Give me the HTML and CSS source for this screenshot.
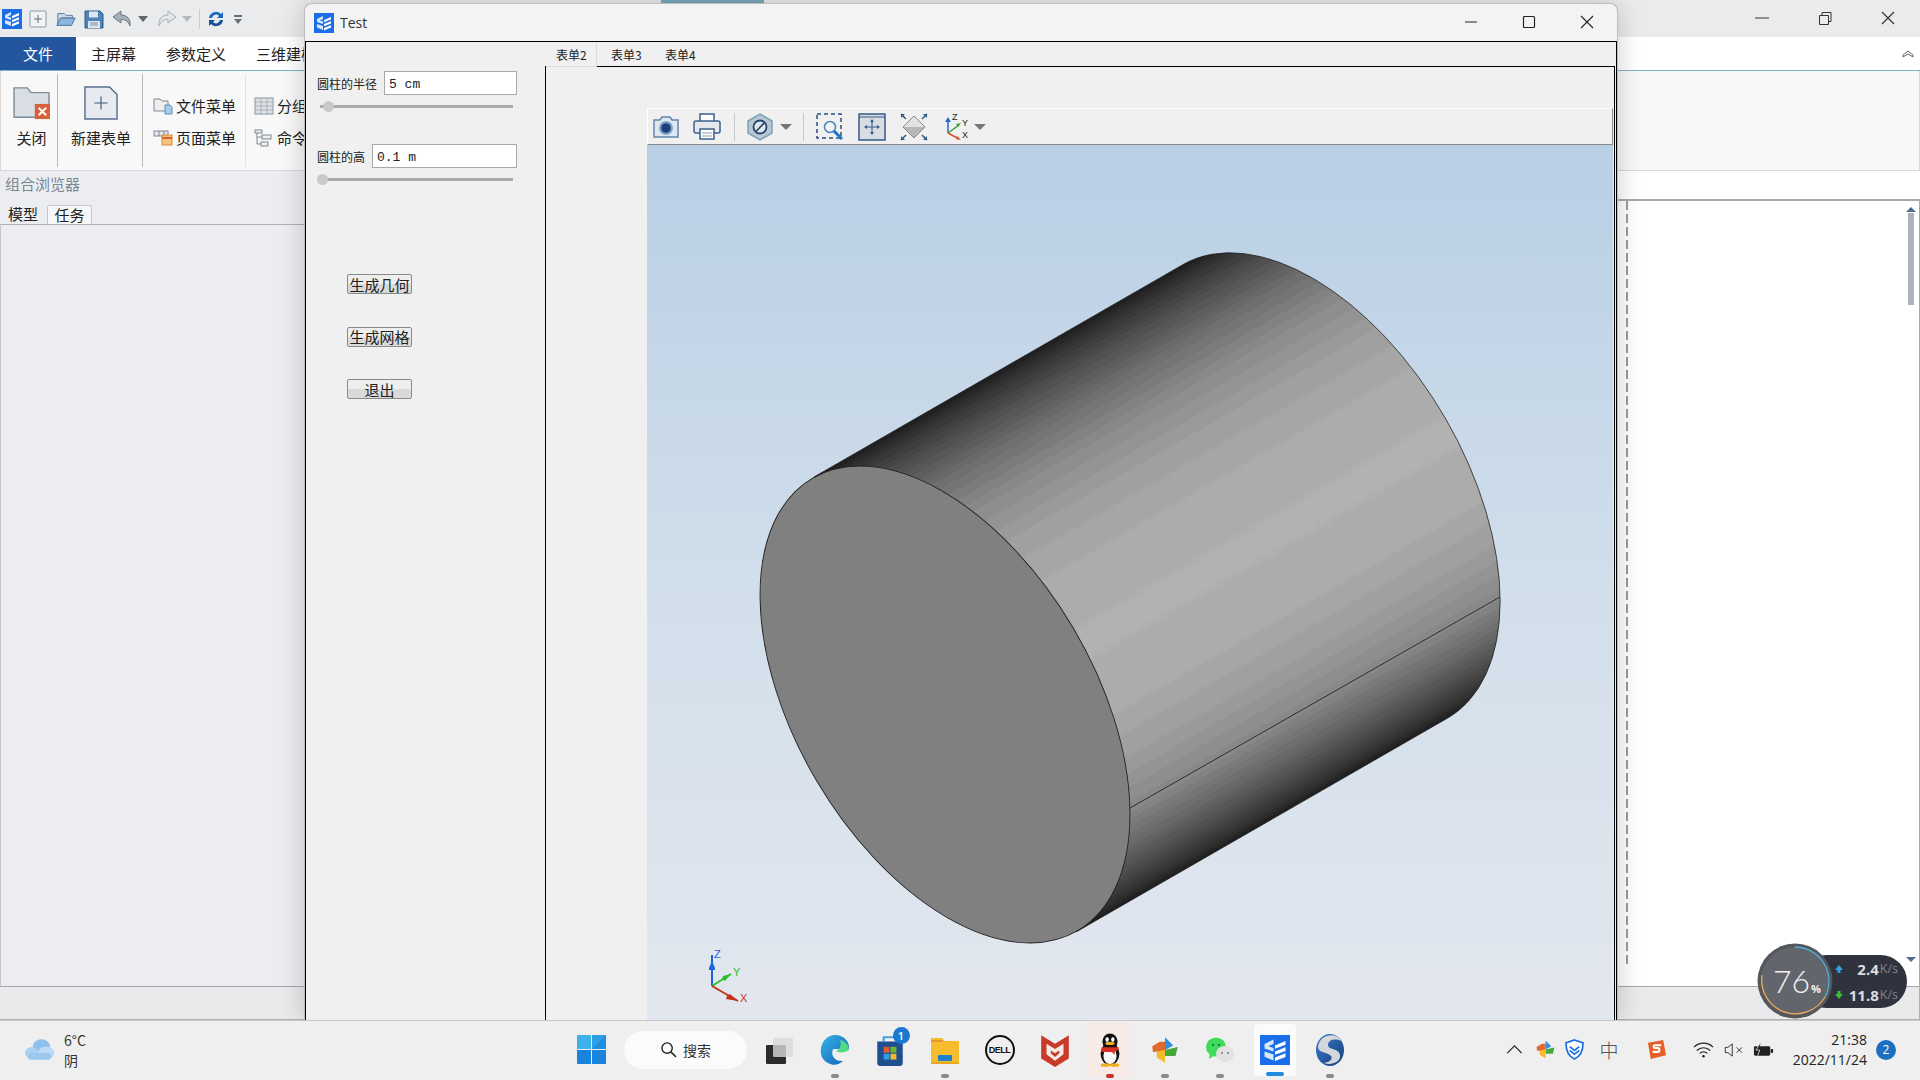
FILE: index.html
```html
<!DOCTYPE html>
<html lang="zh-CN">
<head>
<meta charset="utf-8">
<title>Test</title>
<link rel="stylesheet" href="styles.css">
</head>
<body>
<svg class="defs" width="0" height="0" aria-hidden="true">
  <symbol id="logo" viewBox="0 0 20 20">
    <rect width="20" height="20" fill="#1a6fe8"/>
    <path d="M3 6 L9 3 V6 L5.500 7.500 L9 8.600 V11 L3 9Z M3 11 L9 13 V17 L3 14.500Z" fill="#d8e8fb"/>
    <path d="M10 7 L17 4 V6.500 L10 9.200Z M10 11 L17 8.200 V10.600 L10 13.200Z M10 15 L17 12.200 V14.600 L10 17.400Z" fill="#fff"/>
  </symbol>
  <symbol id="pinwheel" viewBox="0 0 40 40">
    <path d="M20 3 L31 14 L20 20Z" fill="#2f8fdc"/>
    <path d="M20 20 L37 16 L34 28 L20 28Z" fill="#45a83a"/>
    <path d="M20 20 L20 37 L9 30 L9 20Z" fill="#f4bb2d"/>
    <path d="M20 20 L4 23 L3 15 L13 9 L20 9Z" fill="#e0692f"/>
  </symbol>
</svg>

<div class="app">
  <header class="app-title">
    <svg class="qa qa-logo"><use href="#logo"/></svg>
    <svg class="qa" viewBox="0 0 20 20"><rect x="2" y="2" width="16" height="16" rx="1" fill="#f2f3f5" stroke="#8d99a6"/><path d="M10 6v8M6 10h8" stroke="#5c6a78"/></svg>
    <svg class="qa" viewBox="0 0 22 20"><path d="M2 4h7l2 2h7v3H6L2 17Z" fill="#cfd8e3" stroke="#55789b"/><path d="M5 9h16l-4 8H1Z" fill="#8fb6dc" stroke="#3a6a9c"/></svg>
    <svg class="qa" viewBox="0 0 20 20"><path d="M1 2h15l3 3v14H1Z" fill="#4f82b8" stroke="#2c5a8e"/><rect x="5" y="2.500" width="9" height="6" fill="#dfe6ee"/><rect x="4" y="12" width="12" height="7" fill="#dfe6ee"/><path d="M6 14h8M6 16h8" stroke="#7890a8"/></svg>
    <svg class="qa" viewBox="0 0 20 20"><path d="M1 8 L9 2 V6 C15 6 19 10 18 17 C16 12 13 10.500 9 10.500 V14Z" fill="#a7afb9" stroke="#6c7783"/></svg>
    <i class="caret"></i>
    <svg class="qa qa-redo" viewBox="0 0 20 20"><path d="M19 8 L11 2 V6 C5 6 1 10 2 17 C4 12 7 10.500 11 10.500 V14Z" fill="#e3e5e8" stroke="#a9afb7"/></svg>
    <i class="caret caret-light"></i>
    <span class="qa-sep"></span>
    <svg class="qa qa-sync" viewBox="0 0 20 20"><path d="M3 9 A7 7 0 0 1 15 5 L17 3 V9 H11 L13 7 A4 4 0 0 0 6 9Z" fill="#1c68c0"/><path d="M17 11 A7 7 0 0 1 5 15 L3 17 V11 H9 L7 13 A4 4 0 0 0 14 11Z" fill="#164f99"/></svg>
    <i class="qa-more"></i>
    <div class="win-controls">
      <svg class="wc" viewBox="0 0 16 16"><path d="M1 8h14" stroke="#333"/></svg>
      <svg class="wc" viewBox="0 0 16 16"><path d="M2.500 5.500h9v9h-9zM5 5.500V2.500h9v9h-2.500" fill="none" stroke="#333"/></svg>
      <svg class="wc" viewBox="0 0 16 16"><path d="M2 2l12 12M14 2L2 14" stroke="#333" stroke-width="1.200"/></svg>
    </div>
  </header>

  <nav class="app-tabs">
    <span class="app-tab app-tab-active">文件</span>
    <span class="app-tab">主屏幕</span>
    <span class="app-tab">参数定义</span>
    <span class="app-tab">三维建模</span>
    <svg class="collapse" viewBox="0 0 12 10"><path d="M1 6l5-4 5 4v2l-5-3-5 3z" fill="#fff" stroke="#666"/></svg>
  </nav>

  <section class="ribbon">
    <div class="rb-group rb-g1">
      <svg class="rb-big" viewBox="0 0 40 36"><path d="M1 2h14l4 5h19v26H1Z" fill="#d9dee5" stroke="#7d8a98" stroke-width="1.500"/><rect x="23" y="19" width="16" height="16" fill="#d8603a"/><path d="M27 23l8 8M35 23l-8 8" stroke="#fff" stroke-width="2"/></svg>
      <span>关闭</span>
    </div>
    <div class="rb-group rb-g2">
      <svg class="rb-big" viewBox="0 0 36 36"><path d="M1 1h26l8 8v26H1Z" fill="#e7ebf0" stroke="#556f90" stroke-width="1.500"/><path d="M18 11v14M11 18h14" stroke="#3d5877" stroke-width="1.200"/></svg>
      <span>新建表单</span>
    </div>
    <div class="rb-group rb-g3">
      <div class="rb-small"><svg viewBox="0 0 20 18"><path d="M1 2h6l2 2h6v10H1Z" fill="#eceef0" stroke="#7c8692"/><path d="M12 8h5l2 2v7h-7Z" fill="#a5cdea" stroke="#5a93c2"/></svg><span>文件菜单</span></div>
      <div class="rb-small"><svg viewBox="0 0 20 18"><rect x="1" y="2" width="14" height="5" fill="#e6e8ea" stroke="#7c8692"/><path d="M6 2v5M11 2v5" stroke="#7c8692"/><rect x="9" y="6" width="10" height="10" fill="#f5c27c" stroke="#d98b3c"/><path d="M9 9h10" stroke="#d9602e" stroke-width="2"/></svg><span>页面菜单</span></div>
    </div>
    <div class="rb-group rb-g4">
      <div class="rb-small"><svg viewBox="0 0 20 18"><rect x="1" y="1" width="18" height="16" fill="#dfe3e6" stroke="#8a949e"/><path d="M7 1v16M13 1v16M1 5h18M1 9h18M1 13h18" stroke="#a9b1b9"/></svg><span>分组</span></div>
      <div class="rb-small"><svg viewBox="0 0 20 18"><path d="M3 3v12h4M3 8h5" fill="none" stroke="#7c8692"/><rect x="1" y="1" width="7" height="3" fill="#eee" stroke="#7c8692"/><rect x="8" y="6" width="9" height="4" fill="#eee" stroke="#7c8692"/><rect x="7" y="13" width="7" height="4" fill="#eee" stroke="#7c8692"/></svg><span>命令</span></div>
    </div>
  </section>

  <div class="workspace">
    <aside class="browser">
      <div class="browser-title">组合浏览器</div>
      <div class="browser-tabs">
        <span class="browser-tab">模型</span>
        <span class="browser-tab browser-tab-active">任务</span>
      </div>
      <div class="browser-body"></div>
      <div class="browser-foot"></div>
    </aside>
    <div class="right-area">
      <div class="right-top"></div>
      <div class="right-box">
        <div class="right-dash"></div>
        <div class="scroll">
          <i class="scroll-up"></i>
          <i class="scroll-thumb"></i>
          <i class="scroll-down"></i>
        </div>
      </div>
      <div class="right-foot"></div>
    </div>
  </div>
</div>

<div class="backwin-strip"></div>

<div class="dialog">
  <div class="dlg-title">
    <svg class="dlg-logo"><use href="#logo"/></svg>
    <span class="dlg-name">Test</span>
    <div class="dlg-controls">
      <svg class="dc" viewBox="0 0 16 16"><path d="M2 8h12" stroke="#222"/></svg>
      <svg class="dc" viewBox="0 0 16 16"><rect x="2.500" y="2.500" width="11" height="11" rx="1" fill="none" stroke="#222" stroke-width="1.200"/></svg>
      <svg class="dc" viewBox="0 0 16 16"><path d="M2 2l12 12M14 2L2 14" stroke="#222" stroke-width="1.100"/></svg>
    </div>
  </div>
  <div class="dlg-body">
    <div class="form">
      <div class="field">
        <label class="field-label">圆柱的半径</label>
        <div class="field-input">5 cm</div>
      </div>
      <div class="slider"><i class="knob knob-a"></i></div>
      <div class="field field-second">
        <label class="field-label">圆柱的高</label>
        <div class="field-input">0.1 m</div>
      </div>
      <div class="slider"><i class="knob knob-b"></i></div>
      <div class="actions">
        <button class="btn">生成几何</button>
        <button class="btn">生成网格</button>
        <button class="btn">退出</button>
      </div>
    </div>
    <div class="tabs-side">
      <div class="tab-strip">
        <span class="tab tab-active">表单2</span>
        <span class="tab">表单3</span>
        <span class="tab">表单4</span>
      </div>
      <div class="tab-pane">
        <div class="viewer">
          <div class="toolbar">
            <svg class="tb tb-cam" viewBox="0 0 28 26"><path d="M2 6h6l2-3h8l2 3h6v17H2Z" fill="#dfe7f0" stroke="#5f86ad" stroke-width="1.500"/><circle cx="14" cy="14" r="7" fill="#7fa3c8"/><circle cx="14" cy="14" r="4.800" fill="#1e3f78"/></svg>
            <svg class="tb" viewBox="0 0 28 28"><rect x="7" y="1" width="14" height="8" fill="#fff" stroke="#39608c" stroke-width="1.500"/><rect x="1" y="8" width="26" height="12" rx="2" fill="#e4e8ee" stroke="#39608c" stroke-width="1.500"/><rect x="7" y="16" width="14" height="10" fill="#fff" stroke="#39608c" stroke-width="1.500"/><path d="M9 20h10M9 23h10" stroke="#8d9cad"/></svg>
            <span class="tb-sep"></span>
            <svg class="tb tb-nos" viewBox="0 0 26 28"><path d="M13 1L25 8v12l-12 7L1 20V8Z" fill="#b9c7d3" stroke="#7ba2ba" stroke-width="1.500"/><circle cx="13" cy="14" r="6.500" fill="#e2e7ec" stroke="#24456f" stroke-width="1.800"/><path d="M9 18.500L17.500 9.500" stroke="#24456f" stroke-width="1.800"/></svg>
            <i class="tb-caret tb-caret-a"></i>
            <span class="tb-sep"></span>
            <svg class="tb" viewBox="0 0 28 28"><rect x="1" y="1" width="24" height="24" fill="none" stroke="#2a4d80" stroke-width="1.500" stroke-dasharray="4 3"/><circle cx="14" cy="14" r="5.500" fill="#f0f3f6" stroke="#4a86b8" stroke-width="1.500"/><path d="M18 18l8 8" stroke="#1c73c8" stroke-width="3"/></svg>
            <svg class="tb" viewBox="0 0 28 28"><rect x="1" y="1" width="26" height="26" fill="#d8dde2" stroke="#33598a" stroke-width="1.500"/><path d="M1 4h26" stroke="#33598a"/><path d="M14 8v12M8 14h12" stroke="#33598a"/><path d="M14 6l-2 3h4ZM14 22l-2-3h4ZM6 14l3-2v4ZM22 14l-3-2v4Z" fill="#33598a"/></svg>
            <svg class="tb" viewBox="0 0 28 28"><path d="M14 3L25 14 14 25 3 14Z" fill="#b7b7b7"/><path d="M14 3L25 14H3Z" fill="#e2e2e2"/><path d="M14 3L25 14 14 25 3 14Z" fill="none" stroke="#8a8a8a"/><path d="M1 1l5 5M27 1l-5 5M1 27l5-5M27 27l-5-5" stroke="#33598a" stroke-width="1.500"/><path d="M1 1h4L1 5ZM27 1h-4l4 4ZM1 27h4l-4-4ZM27 27h-4l4-4Z" fill="#33598a"/></svg>
            <svg class="tb tb-axes" viewBox="0 0 28 28">
              <path d="M6 20V7" stroke="#1f6fc8" stroke-width="1.500"/><path d="M6 4l-3 5h6z" fill="#1f6fc8"/>
              <path d="M6 20L17 12" stroke="#3c9a3c" stroke-width="1.500"/><path d="M19 10l-5 1 2 3z" fill="#3c9a3c"/>
              <path d="M6 20l11 6" stroke="#d8502a" stroke-width="1.500"/><path d="M19 27l-5-1 1-3z" fill="#d8502a"/>
              <text x="10" y="7" class="tb-axis-label">Z</text><text x="20" y="13" class="tb-axis-label">Y</text><text x="20" y="25" class="tb-axis-label">X</text>
            </svg>
            <i class="tb-caret"></i>
          </div>
          <svg class="canvas" viewBox="647 145 966 875" preserveAspectRatio="xMinYMin slice">
            <defs>
              <linearGradient id="cyl" gradientUnits="userSpaceOnUse" x1="814" y1="477" x2="1076" y2="932">
                <stop offset="0" stop-color="#1e1e1e"/>
                <stop offset=".025" stop-color="#343434"/>
                <stop offset=".07" stop-color="#505050"/>
                <stop offset=".13" stop-color="#707070"/>
                <stop offset=".21" stop-color="#8c8c8c"/>
                <stop offset=".3" stop-color="#a0a0a0"/>
                <stop offset=".41" stop-color="#acacac"/>
                <stop offset=".53" stop-color="#b2b2b2"/>
                <stop offset=".66" stop-color="#acacac"/>
                <stop offset=".77" stop-color="#9c9c9c"/>
                <stop offset=".85" stop-color="#888"/>
                <stop offset=".91" stop-color="#686868"/>
                <stop offset=".955" stop-color="#484848"/>
                <stop offset=".985" stop-color="#303030"/>
                <stop offset="1" stop-color="#1e1e1e"/>
              </linearGradient>
              <filter id="facets" color-interpolation-filters="sRGB">
                <feComponentTransfer>
                  <feFuncR type="discrete" tableValues="0 .034 .058 .081 .105 .129 .153 .177 .2 .224 .248 .272 .296 .32 .343 .367 .391 .415 .439 .462 .486 .51 .534 .558 .581 .605 .629 .653 .677 .7 .724 .748 .772 .796 .82 .843 .867 .891 .915 .939 .962 .986"/>
                  <feFuncG type="discrete" tableValues="0 .034 .058 .081 .105 .129 .153 .177 .2 .224 .248 .272 .296 .32 .343 .367 .391 .415 .439 .462 .486 .51 .534 .558 .581 .605 .629 .653 .677 .7 .724 .748 .772 .796 .82 .843 .867 .891 .915 .939 .962 .986"/>
                  <feFuncB type="discrete" tableValues="0 .034 .058 .081 .105 .129 .153 .177 .2 .224 .248 .272 .296 .32 .343 .367 .391 .415 .439 .462 .486 .51 .534 .558 .581 .605 .629 .653 .677 .7 .724 .748 .772 .796 .82 .843 .867 .891 .915 .939 .962 .986"/>
                </feComponentTransfer>
              </filter>
            </defs>
            <path d="M814 477 L1184 264 A262.200 149.400 59.600 0 1 1446 719 L1076 932Z" fill="url(#cyl)" filter="url(#facets)"/>
            <path d="M814 477 L1184 264 A262.200 149.400 59.600 0 1 1446 719 L1076 932" fill="none" stroke="#222" stroke-width=".8"/>
            <path d="M1130 808 L1500 597" stroke="#222" stroke-width=".9" fill="none"/>
            <ellipse cx="945" cy="704.500" rx="262.200" ry="149.400" transform="rotate(59.600 945 704.500)" fill="#808080" stroke="#222" stroke-width=".9"/>
            <g class="triad">
              <path d="M712 986V955" stroke="#1c66dc" stroke-width="2"/><path d="M712 961l-3 7v2h6v-2z" fill="#1c66dc"/>
              <path d="M712 986L731 974" stroke="#2ec02e" stroke-width="2"/><path d="M731 974l-8 2-1 3 3 2z" fill="#2ec02e"/>
              <path d="M712 986L738 1001" stroke="#c8301c" stroke-width="2"/><path d="M738 1001l-8-7-3 2-1 3z" fill="#c8301c"/>
              <text x="714" y="958" class="tri tri-z">Z</text>
              <text x="733" y="976" class="tri tri-y">Y</text>
              <text x="740" y="1002" class="tri tri-x">X</text>
            </g>
          </svg>
        </div>
      </div>
    </div>
  </div>
</div>

<div class="net-widget">
  <div class="net-pill">
    <div class="net-row"><svg class="net-arrow" viewBox="0 0 10 10"><path d="M5 1l4 5H6.500v3h-3V6H1z" fill="#38a0e0"/></svg><span class="net-val">2.4</span><span class="net-unit">K/s</span></div>
    <div class="net-row"><svg class="net-arrow" viewBox="0 0 10 10"><path d="M5 9L1 4h2.500V1h3v3H9z" fill="#3cc03c"/></svg><span class="net-val">11.8</span><span class="net-unit">K/s</span></div>
  </div>
  <svg class="net-dial" viewBox="0 0 76 76">
    <circle cx="38" cy="38" r="37.500" fill="#55575d"/>
    <circle cx="38" cy="38" r="34" fill="#63656c"/>
    <path d="M38 4 A34 34 0 0 1 68 54" fill="none" stroke="#4fb0dc" stroke-width="1.300"/>
    <path d="M68 54 A34 34 0 0 1 5 32" fill="none" stroke="#f0a858" stroke-width="1.300"/>
    <text x="16" y="50" class="dial-num">76</text>
    <text x="54" y="50" class="dial-pct">%</text>
  </svg>
</div>

<footer class="taskbar">
  <div class="weather">
    <svg class="weather-icon" viewBox="0 0 32 24"><ellipse cx="18" cy="9" rx="9" ry="8" fill="#8cc0ee"/><ellipse cx="8" cy="15" rx="7" ry="6" fill="#a9d0f2"/><ellipse cx="23" cy="15" rx="8.500" ry="6.500" fill="#bcdaf5"/><rect x="4" y="15" width="24" height="7" rx="3" fill="#9cc8ef"/></svg>
    <div class="weather-text"><span>6°C</span><span>阴</span></div>
  </div>
  <div class="start-tile">
    <svg class="start" viewBox="0 0 29 29"><path d="M0 1a1 1 0 0 1 1-1h13v14H0Z" fill="#3db2ea"/><path d="M15 0h13a1 1 0 0 1 1 1v13H15Z" fill="#2ba0e6"/><path d="M29 0L15 14h14Z" fill="#1f8de0"/><path d="M0 15h14v14H1a1 1 0 0 1-1-1Z" fill="#1a84dc"/><path d="M15 15h14v13a1 1 0 0 1-1 1H15Z" fill="#1a84dc"/></svg>
  </div>
  <div class="search">
    <svg class="search-icon" viewBox="0 0 18 18"><circle cx="7.500" cy="7.500" r="5.500" fill="none" stroke="#222" stroke-width="1.500"/><path d="M11.500 11.500L17 17" stroke="#222" stroke-width="1.600"/></svg>
    <span>搜索</span>
  </div>
  <div class="tiles">
    <div class="tile"><svg class="ti" viewBox="0 0 30 30"><rect x="1" y="10" width="20" height="19" rx="1" fill="#2b2b2b"/><rect x="8" y="3" width="20" height="19" rx="1" fill="#d8d8d8" opacity=".8"/></svg></div>
    <div class="tile tile-dot"><svg class="ti" viewBox="0 0 30 32"><defs><linearGradient id="edge" x1="0" y1="0" x2="1" y2="1"><stop offset="0" stop-color="#35b4e8"/><stop offset="1" stop-color="#1560b8"/></linearGradient></defs><path d="M15 1C24 1 30 8 29 15 H13 C10 22 16 28 23 27 C19 31 13 32 8 29 C2 26 0 20 1 14 C2 7 8 1 15 1Z" fill="url(#edge)"/><path d="M20 6C26 7 29 12 29 16 C25 19 19 19 16 17 C20 15 22 11 20 6Z" fill="#4fdc82"/></svg></div>
    <div class="tile"><div class="tile-inner"><svg class="ti" viewBox="0 0 28 32"><path d="M8 8V4h12v4" fill="none" stroke="#4ca0e0" stroke-width="2"/><path d="M2 8h24v20a3 3 0 0 1-3 3H5a3 3 0 0 1-3-3Z" fill="#1f4f8e"/><rect x="8" y="13" width="5.500" height="5.500" fill="#e55a2c"/><rect x="14.500" y="13" width="5.500" height="5.500" fill="#6cb82e"/><rect x="8" y="19.500" width="5.500" height="5.500" fill="#2ca0e6"/><rect x="14.500" y="19.500" width="5.500" height="5.500" fill="#f4bb2d"/></svg><span class="store-badge">1</span></div></div>
    <div class="tile tile-dot"><svg class="ti" viewBox="0 0 30 30"><path d="M1 3h11l3 3h14v22H1Z" fill="#f6bc2e"/><path d="M1 6h12" stroke="#e08a2c" stroke-width="1.500"/><rect x="8" y="20" width="14" height="6" rx="1" fill="#1c80d0"/><rect x="1" y="27" width="28" height="2" fill="#e8a820"/></svg></div>
    <div class="tile"><div class="dell"><span>DELL</span></div></div>
    <div class="tile"><svg class="ti" viewBox="0 0 28 32"><path d="M1 2L14 10 27 2V24L14 32 1 24Z" fill="#c93a28"/><path d="M6 10L14 15 22 10V20L14 26 6 20Z" fill="#f3e9e6"/><path d="M10 16.500L14 19 18 16.500V19L14 22.500 10 19Z" fill="#c93a28"/></svg></div>
    <div class="tile tile-qq"><svg class="ti" viewBox="0 0 28 36"><ellipse cx="14" cy="22" rx="10" ry="12" fill="#111"/><ellipse cx="14" cy="24" rx="7" ry="9" fill="#f7f7f7"/><ellipse cx="14" cy="9" rx="8" ry="8.500" fill="#111"/><ellipse cx="11" cy="7" rx="1.800" ry="2.500" fill="#fff"/><ellipse cx="17" cy="7" rx="1.800" ry="2.500" fill="#fff"/><ellipse cx="14" cy="11" rx="5" ry="1.800" fill="#f2b023"/><path d="M5 15h18v3l-4 1v4l-3-3H5Z" fill="#d83020"/><ellipse cx="9" cy="34" rx="5" ry="2" fill="#f2b023"/><ellipse cx="19" cy="34" rx="5" ry="2" fill="#f2b023"/></svg></div>
    <div class="tile tile-dot"><svg class="ti"><use href="#pinwheel"/></svg></div>
    <div class="tile tile-dot"><svg class="ti" viewBox="0 0 30 30"><ellipse cx="11" cy="12" rx="10" ry="9.500" fill="#3ddc5a"/><path d="M5 18l-1 6 6-4Z" fill="#3ddc5a"/><circle cx="8" cy="10" r="1" fill="#155"/><circle cx="14" cy="10" r="1" fill="#155"/><ellipse cx="20" cy="19" rx="9" ry="8" fill="#e2e2e2"/><circle cx="17" cy="18" r="1" fill="#777"/><circle cx="23" cy="18" r="1" fill="#777"/></svg></div>
    <div class="tile tile-app"><svg class="ti ti-app"><use href="#logo"/></svg></div>
    <div class="tile tile-dot"><svg class="ti" viewBox="0 0 30 34"><defs><linearGradient id="swirl" x1="0" y1="0" x2="1" y2="1"><stop offset="0" stop-color="#3c7cc8"/><stop offset="1" stop-color="#163e80"/></linearGradient></defs><ellipse cx="15" cy="17" rx="14" ry="16" fill="url(#swirl)"/><path d="M5 8C11 0 23 1 26 8 C20 5 13 7 13 12 C13 17 24 15 25 22 C26 29 16 33 9 30 C15 29 18 26 16 23 C13 19 3 20 3 14 C3 12 4 10 5 8Z" fill="#d3d7dc"/></svg></div>
  </div>
  <div class="tray">
    <svg class="tr tr-chev" viewBox="0 0 18 10"><path d="M1 9l8-8 8 8" fill="none" stroke="#222" stroke-width="1.300"/></svg>
    <svg class="tr tr-pin"><use href="#pinwheel"/></svg>
    <svg class="tr tr-shield" viewBox="0 0 20 22"><path d="M10 1l9 3c0 8-2 14-9 17C3 18 1 12 1 4Z" fill="#fff" stroke="#1c70e0" stroke-width="1.800"/><path d="M5 8l5 4 5-4M5 12l5 4 5-4" fill="none" stroke="#1c70e0" stroke-width="1.800"/></svg>
    <span class="tr-zh">中</span>
    <svg class="tr tr-s" viewBox="0 0 22 22"><path d="M2 4L18 1l3 16L5 21Z" fill="#e4622a"/><path d="M16 6.500H9.500c-2 0-2 3 0 3h3c2 0 2 4 0 4H7" fill="none" stroke="#fff" stroke-width="2.200"/></svg>
    <svg class="tr tr-wifi" viewBox="0 0 22 16"><path d="M1 5a14 14 0 0 1 20 0M4 8.500a10 10 0 0 1 14 0M7 11.500a6 6 0 0 1 8 0" fill="none" stroke="#222" stroke-width="1.200"/><circle cx="11" cy="14.500" r="1.300" fill="#222"/></svg>
    <svg class="tr tr-vol" viewBox="0 0 22 16"><path d="M1 5h3l5-4v14l-5-4H1Z" fill="none" stroke="#333" stroke-width="1.100"/><path d="M14 5l6 6M20 5l-6 6" stroke="#333" stroke-width="1.100"/></svg>
    <svg class="tr tr-bat" viewBox="0 0 22 16"><rect x="1" y="4" width="17" height="10" rx="1.500" fill="#222"/><rect x="18.500" y="7" width="2.500" height="4" fill="#222"/><path d="M8 0L3 8h4l-2 6" fill="#222" stroke="#f0f0f0" stroke-width=".8"/></svg>
    <div class="clock"><span>21:38</span><span>2022/11/24</span></div>
    <span class="notify">2</span>
  </div>
</footer>
</body>
</html>
```

FILE: styles.css
```css
* { box-sizing: border-box; }
html, body { margin: 0; padding: 0; }
body {
  width: 1920px;
  height: 1080px;
  overflow: hidden;
  position: relative;
  display: flex;
  flex-direction: column;
  font-family: "Noto Sans CJK SC", "Noto Sans", sans-serif;
  font-size: 15px;
  color: #222;
  background: #fff;
}
.defs { position: absolute; }

/* background application */
.app { height: 1020px; display: flex; flex-direction: column; flex: none; }
.app-title {
  height: 37px;
  background: #eaebed;
  display: flex;
  align-items: center;
  padding-left: 2px;
  flex: none;
}
.qa { width: 20px; height: 20px; margin-right: 8px; flex: none; }
.qa-logo { margin-right: 6px; }
.qa-redo { margin-left: 9px; margin-right: 5px; }
.qa-sync { margin-right: 6px; }
.caret {
  width: 0; height: 0; margin-left: -2px;
  border-left: 5px solid transparent;
  border-right: 5px solid transparent;
  border-top: 6px solid #5e6670;
}
.caret-light { border-top-color: #b5b9bf; margin-left: 0; }
.qa-sep { width: 1px; height: 20px; background: #c9ccd0; margin: 0 6px 0 7px; }
.qa-more {
  width: 8px; height: 8px; margin-left: 2px;
  border-top: 2px solid #6a7078;
  position: relative;
}
.qa-more::after {
  content: "";
  position: absolute; left: 0; top: 2px;
  border-left: 4px solid transparent;
  border-right: 4px solid transparent;
  border-top: 5px solid #6a7078;
}
.win-controls { margin-left: auto; display: flex; gap: 47px; padding: 0 24px 2px 0; }
.wc { width: 16px; height: 16px; }

.app-tabs {
  height: 34px;
  background: #fff;
  border-bottom: 1px solid #7fb2c8;
  display: flex;
  align-items: center;
  flex: none;
}
.app-tab { padding: 0 15px; white-space: nowrap; color: #222; }
.app-tab-active {
  width: 76px;
  height: 33px;
  background: #24569f;
  color: #fff;
  display: flex;
  align-items: center;
  justify-content: center;
  padding: 0;
}
.collapse { width: 12px; height: 10px; margin-left: auto; margin-right: 6px; }

.ribbon {
  height: 100px;
  background: #f8f8f8;
  border: 1px solid #d8d8d8;
  border-top: none;
  display: flex;
  padding-top: 3px;
  flex: none;
}
.rb-group { height: 93px; border-right: 1px solid #b9b9b9; flex: none; }
.rb-g1, .rb-g2 {
  display: flex; flex-direction: column; align-items: center;
  padding-top: 12px;
}
.rb-g1 { width: 57px; padding-left: 5px; }
.rb-g2 { width: 85px; padding-left: 2px; }
.rb-big { width: 38px; height: 34px; margin-bottom: 7px; }
.rb-g3 { width: 103px; border-right-color: #e2e2e2; }
.rb-g3, .rb-g4 {
  display: flex; flex-direction: column; gap: 11px;
  padding: 21px 0 0 10px;
}
.rb-g4 { width: 120px; border: none; padding-left: 8px; }
.rb-small { display: flex; align-items: center; gap: 3px; height: 21px; white-space: nowrap; }
.rb-small svg { width: 20px; height: 18px; flex: none; }

.workspace { flex: 1; display: flex; min-height: 0; }
.browser {
  width: 305px;
  background: #ebedf0;
  display: flex;
  flex-direction: column;
  flex: none;
}
.browser-title { height: 34px; padding: 1px 0 0 5px; color: #7a8896; line-height: 24px; }
.browser-tabs { height: 19px; display: flex; padding-left: 0; align-items: flex-end; flex: none; }
.browser-tab { width: 46px; height: 19px; text-align: center; line-height: 17px; }
.browser-tab-active {
  background: #f6f7f8;
  border: 1px solid #c6c8cb;
  border-bottom: none;
  border-radius: 2px 2px 0 0;
  width: 45px;
  margin-left: 1px;
}
.browser-body { flex: 1; border-top: 1px solid #aeb0b2; border-left: 1px solid #c8c8c8; }
.browser-foot { height: 34px; border-top: 1px solid #a8a8a8; background: #e8eaec; border-bottom: 1px solid #b0b0b0; }

.right-area { flex: 1; display: flex; flex-direction: column; background: #fff; min-width: 0; }
.right-top { height: 28px; flex: none; }
.right-box {
  flex: 1;
  border-top: 2px solid #aaa;
  border-right: 1px solid #aaa;
  display: flex;
  justify-content: flex-end;
  position: relative;
}
.right-dash {
  position: absolute;
  left: 1321px;
  top: 0;
  bottom: 19px;
  width: 2px;
  background: repeating-linear-gradient(#9c9c9c 0 9px, transparent 9px 13px);
}
.scroll { width: 14px; margin-right: 1px; display: flex; flex-direction: column; align-items: center; padding-top: 6px; }
.scroll-up, .scroll-down { width: 0; height: 0; border-left: 5px solid transparent; border-right: 5px solid transparent; }
.scroll-up { border-bottom: 5px solid #4f6c92; }
.scroll-down { border-top: 5px solid #4f6c92; margin-top: auto; margin-bottom: 24px; }
.scroll-thumb { width: 6px; height: 92px; background: #aeb3b9; margin-top: 1px; }
.right-foot { height: 34px; flex: none; background: #e9eaec; border-top: 1px solid #a8a8a8; border-bottom: 1px solid #b0b0b0; border-right: 1px solid #b0b0b0; }

.backwin-strip {
  position: absolute;
  left: 661px; top: 0;
  width: 103px; height: 4px;
  background: #7aa9bf;
}

/* test dialog */
.dialog {
  position: absolute;
  left: 304px;
  top: 3px;
  width: 1314px;
  height: 1017px;
  background: #f3f3f3;
  border: 1px solid #bdbdbd;
  border-bottom: none;
  border-radius: 8px 8px 0 0;
  box-shadow: 0 0 26px rgba(0, 0, 0, .2);
  display: flex;
  flex-direction: column;
}
.dlg-title { height: 37px; display: flex; align-items: center; padding-left: 9px; flex: none; }
.dlg-logo { width: 20px; height: 20px; }
.dlg-name { margin-left: 6px; font-family: "Open Sans", "Noto Sans", sans-serif; font-size: 14px; color: #333; }
.dlg-controls { margin-left: auto; display: flex; gap: 42px; padding: 0 22px 2px 0; }
.dc { width: 16px; height: 16px; }
.dlg-body {
  flex: 1;
  background: #f0f0f0;
  border: 1px solid #000;
  border-bottom: none;
  display: flex;
  min-height: 0;
}

.form { width: 240px; flex: none; padding: 29px 29px 0 11px; }
.field { display: flex; align-items: center; gap: 7px; height: 24px; }
.field-label { font-size: 12px; white-space: nowrap; }
.field-input {
  flex: 1;
  height: 24px;
  background: #fff;
  border: 1px solid #a9a9a9;
  padding-left: 4px;
  font-family: "Liberation Mono", monospace;
  font-size: 13px;
  line-height: 25px;
  color: #222;
}
.slider {
  height: 3px;
  margin: 10px 4px 0 3px;
  background: #ababab;
  position: relative;
}
.knob {
  position: absolute;
  top: -4px;
  width: 11px;
  height: 11px;
  border-radius: 50%;
  background: #c9c9c9;
}
.knob-a { left: 3px; }
.knob-b { left: -3px; }
.slider + .field-second { margin-top: 36px; }
.actions {
  margin: 93px 0 0 30px;
  display: flex;
  flex-direction: column;
  gap: 32.500px;
  align-items: flex-start;
}
.btn {
  width: 65px;
  height: 20px;
  padding: 0;
  border: 1px solid #8a8a8a;
  border-radius: 2px;
  background: linear-gradient(#eeeeee 0 50%, #dadada 50% 100%);
  font-family: "Noto Sans CJK SC", sans-serif;
  font-size: 15px;
  line-height: 17px;
  color: #222;
}

.tabs-side { flex: 1; display: flex; flex-direction: column; min-width: 0; }
.tab-strip { height: 25px; display: flex; flex: none; margin-right: 1px; position: relative; }
.tab { width: 54px; padding-left: 14px; font-size: 12px; line-height: 26px; white-space: nowrap; }
.tab-active {
  width: 51px;
  height: 25px;
  padding-left: 10px;
  background: #f0f0f0;
  border: 1px solid #dcdcdc;
  border-top: none;
  border-left: none;
  position: relative;
  z-index: 1;
}
.tab-pane {
  flex: 1;
  min-height: 0;
  border: 1px solid #000;
  border-bottom: none;
  margin: -1px 1px 0 -1px;
  padding: 41px 1px 0 101px;
}
.viewer { height: 100%; display: flex; flex-direction: column; }
.toolbar {
  height: 37px;
  flex: none;
  background: #f0f0f0;
  border: 1px solid #fff;
  border-right-color: #8a8a8a;
  border-bottom-color: #8a8a8a;
  display: flex;
  align-items: center;
  padding-left: 4px;
}
.tb { width: 28px; height: 28px; margin-right: 14px; flex: none; }
.tb-cam { margin-right: 13px; }
.tb-nos { width: 26px; margin-right: 7px; }
.tb-sep { width: 1px; height: 28px; background: #c8c8c8; margin: 0 12px 0 -1px; flex: none; }
.tb-caret {
  width: 0; height: 0; flex: none;
  border-left: 6px solid transparent;
  border-right: 6px solid transparent;
  border-top: 6px solid #777;
  margin-right: 11px;
}
.tb-caret-a { margin-right: 12px; }
.tb-axes { margin-right: 4px; }
.tb-axis-label { font-family: "Liberation Sans", sans-serif; font-size: 9px; fill: #222; }
.canvas {
  flex: 1;
  width: 100%;
  min-height: 0;
  display: block;
  background: linear-gradient(#b9cfe5, #d2dfeb 52%, #e3e7ef);
}
.tri { font-family: "Liberation Sans", sans-serif; font-size: 11px; }
.tri-z { fill: #1c66dc; }
.tri-y { fill: #2ec02e; }
.tri-x { fill: #c8301c; }

/* network widget */
.net-widget {
  position: absolute;
  left: 1757px;
  top: 943px;
  width: 152px;
  height: 76px;
  display: flex;
  align-items: center;
}
.net-dial { position: absolute; left: 0; top: 0; width: 76px; height: 76px; }
.net-pill {
  margin-left: 43px;
  width: 107px;
  height: 53px;
  background: #30333d;
  border-radius: 27px;
  padding: 2px 9px 0 34px;
  display: flex;
  flex-direction: column;
  justify-content: space-around;
}
.net-row { display: flex; align-items: center; justify-content: flex-end; font-family: "Open Sans", sans-serif; line-height: 16px; }
.net-arrow { width: 10px; height: 10px; margin-right: auto; }
.net-val { font-size: 15px; font-weight: 700; color: #dcdde0; }
.net-unit { font-size: 12.500px; color: #7e828c; margin-left: 1px; }
.dial-num { font-family: "Lato", "Open Sans", sans-serif; font-size: 32px; font-weight: 300; fill: #f2f2f2; }
.dial-pct { font-family: "Open Sans", sans-serif; font-size: 11px; font-weight: 700; fill: #f2f2f2; }

/* taskbar */
.taskbar {
  height: 60px;
  flex: none;
  background: #efefef;
  border-top: 1px solid #c8c8c8;
  display: flex;
  align-items: center;
  padding-bottom: 2px;
  position: relative;
}
.weather { width: 564px; flex: none; display: flex; align-items: center; padding-left: 24px; gap: 9px; }
.weather-icon { width: 31px; height: 24px; }
.weather-text { display: flex; flex-direction: column; font-size: 14px; line-height: 20px; color: #333; }
.start-tile { width: 55px; flex: none; display: flex; justify-content: center; }
.start { width: 29px; height: 29px; }
.search {
  width: 123px;
  height: 38px;
  margin-left: 5px;
  border-radius: 19px;
  background: #fbfbfb;
  display: flex;
  align-items: center;
  gap: 6px;
  padding-left: 36px;
  flex: none;
  font-size: 14px;
  color: #333;
}
.search-icon { width: 17px; height: 17px; flex: none; }
.tiles { display: flex; margin-left: 5px; flex: none; align-self: flex-start; }
.tile {
  width: 55px;
  height: 58px;
  display: flex;
  align-items: center;
  justify-content: center;
  position: relative;
  flex: none;
}
.ti { width: 30px; height: 34px; }
.tile-inner { position: relative; display: flex; }
.store-badge {
  position: absolute;
  right: -5px;
  top: -6px;
  width: 17px;
  height: 17px;
  border-radius: 50%;
  background: #1a78d0;
  color: #fff;
  font-size: 11px;
  line-height: 17px;
  text-align: center;
  font-family: "Open Sans", sans-serif;
  font-weight: 600;
}
.tile-dot::after, .tile-qq::after, .tile-app::after {
  content: "";
  position: absolute;
  bottom: 1px;
  left: 50%;
  width: 8px;
  height: 4px;
  margin-left: -4px;
  border-radius: 2px;
  background: #8a8a8a;
}
.tile-qq { background: #f7ebe8; border-radius: 5px; height: 56px; margin: 1px 5px 0; width: 45px; }
.tile-qq::after { background: #c8302c; bottom: 0; }
.tile-app { background: #fbfbfb; border-radius: 4px; height: 52px; width: 42px; margin: 3px 6.500px 0; }
.tile-app::after { background: #1f8ae0; width: 18px; margin-left: -9px; bottom: 0; }
.ti-app { width: 30px; height: 30px; }
.dell {
  width: 30px;
  height: 30px;
  border-radius: 50%;
  border: 2px solid #111;
  display: flex;
  align-items: center;
  justify-content: center;
  font-family: "Liberation Sans", sans-serif;
  font-weight: 700;
  font-size: 9px;
  letter-spacing: -.5px;
  color: #111;
}

.tray {
  margin-left: auto;
  display: flex;
  align-items: center;
  padding-right: 24px;
  flex: none;
}
.tr { flex: none; }
.tr-chev { width: 17px; height: 9px; }
.tr-pin { width: 21px; height: 21px; margin-left: 12px; }
.tr-shield { width: 19px; height: 21px; margin-left: 9px; }
.tr-zh { width: 20px; font-size: 19px; line-height: 22px; font-weight: 300; color: #555; margin-left: 15.700px; }
.tr-s { width: 21px; height: 21px; margin-left: 26.800px; }
.tr-wifi { width: 21px; height: 16px; margin-left: 26.200px; }
.tr-vol { width: 20px; height: 14px; margin-left: 10px; }
.tr-bat { width: 21px; height: 16px; margin-left: 8.600px; }
.clock {
  width: 78px;
  margin-left: 15px;
  display: flex;
  flex-direction: column;
  align-items: flex-end;
  font-family: "Open Sans", sans-serif;
  font-size: 14px;
  line-height: 20px;
  color: #222;
  white-space: nowrap;
}
.notify {
  width: 20px;
  height: 20px;
  border-radius: 50%;
  margin-left: 9px;
  background: #1a6fc0;
  color: #fff;
  font-family: "Open Sans", sans-serif;
  font-size: 12px;
  line-height: 20px;
  text-align: center;
}
```
